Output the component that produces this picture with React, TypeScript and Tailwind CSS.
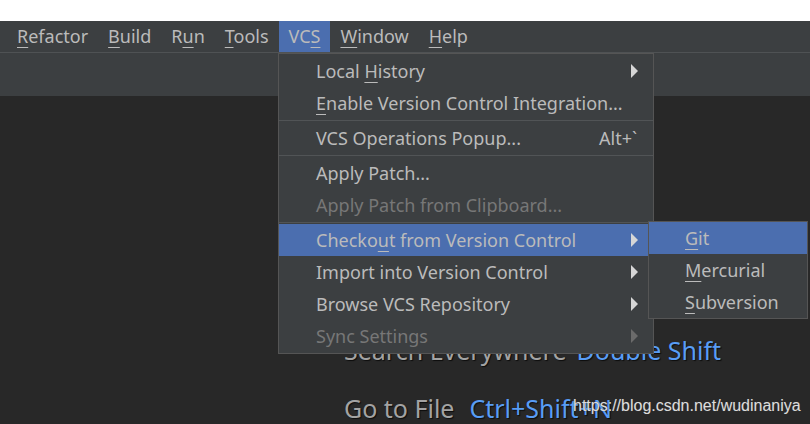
import React from 'react';

type Item = {
  label: string;
  key?: number; // index of the mnemonic letter
  shortcut?: string;
  arrow?: boolean;
  disabled?: boolean;
  active?: boolean;
};

const topMenus: { label: string; key: number; active?: boolean }[] = [
  { label: 'Refactor', key: 0 },
  { label: 'Build', key: 0 },
  { label: 'Run', key: 1 },
  { label: 'Tools', key: 0 },
  { label: 'VCS', key: 2, active: true },
  { label: 'Window', key: 0 },
  { label: 'Help', key: 0 },
];

const groups: Item[][] = [
  [
    { label: 'Local History', key: 6, arrow: true },
    { label: 'Enable Version Control Integration...', key: 0 },
  ],
  [{ label: 'VCS Operations Popup...', shortcut: 'Alt+`' }],
  [
    { label: 'Apply Patch...' },
    { label: 'Apply Patch from Clipboard...', disabled: true },
  ],
  [
    { label: 'Checkout from Version Control', key: 6, arrow: true, active: true },
    { label: 'Import into Version Control', arrow: true },
    { label: 'Browse VCS Repository', arrow: true },
    { label: 'Sync Settings', arrow: true, disabled: true },
  ],
];

const checkoutItems: Item[] = [
  { label: 'Git', key: 0, active: true },
  { label: 'Mercurial', key: 0 },
  { label: 'Subversion', key: 0 },
];

function Label({ text, k }: { text: string; k?: number }) {
  if (k === undefined) return <span>{text}</span>;
  return (
    <span>
      {text.slice(0, k)}
      <span className="underline decoration-1 underline-offset-[4px]">{text[k]}</span>
      {text.slice(k + 1)}
    </span>
  );
}

function Arrow({ dim }: { dim?: boolean }) {
  return (
    <svg width="7" height="14" viewBox="0 0 7 14" className="shrink-0">
      <path d="M0 0 L7 7 L0 14 Z" fill={dim ? '#6b6b6b' : '#d6d6d6'} />
    </svg>
  );
}

function Row({ item, padLeft }: { item: Item; padLeft: string }) {
  return (
    <div
      className={`flex h-8 items-center justify-between pr-[15px] ${padLeft} ${
        item.active ? 'bg-[#4b6eaf]' : ''
      } ${item.disabled ? 'text-[#777777]' : 'text-[#bbbbbb]'}`}
    >
      <Label text={item.label} k={item.key} />
      {item.shortcut && <span className="pr-[1px]">{item.shortcut}</span>}
      {item.arrow && <Arrow dim={item.disabled} />}
    </div>
  );
}

export default function App() {
  return (
    <div className="relative flex h-screen w-full flex-col overflow-hidden bg-[#282828] font-['Noto_Sans',sans-serif] text-[18px]">
      <div className="h-[21px] shrink-0 bg-white" />

      {/* menu bar */}
      <div className="flex h-[32px] shrink-0 items-stretch border-b border-[#4f5254] bg-[#3c3f41] pl-[7px] text-[#bbbbbb]">
        {topMenus.map((m) => (
          <div
            key={m.label}
            className={`flex items-center px-[10px] ${m.active ? 'bg-[#4b6eaf]' : ''}`}
          >
            <Label text={m.label} k={m.key} />
          </div>
        ))}
      </div>

      {/* toolbar */}
      <div className="h-[43px] shrink-0 bg-[#3c3f41]" />

      {/* editor empty state */}
      <div className="flex flex-1 flex-col gap-[24px] pl-[344px] pt-[237px] text-[25px] leading-[34px] text-[#a3a3a3] [text-shadow:1px_1px_1px_rgba(0,0,0,0.7)]">
        <div className="whitespace-nowrap">
          Search Everywhere<span className="ml-[10px] text-[#589df6]">Double Shift</span>
        </div>
        <div className="whitespace-nowrap">
          Go to File<span className="ml-[15px] text-[#589df6]">Ctrl+Shift+N</span>
        </div>
      </div>

      {/* VCS dropdown */}
      <div className="absolute left-[278px] top-[53px] w-[376px] border border-[#555555] bg-[#3c3f41] py-px">
        {groups.map((g, gi) => (
          <React.Fragment key={gi}>
            {gi > 0 && (
              <div className="flex h-[3px] items-center">
                <div className="h-px w-full bg-[#515456]" />
              </div>
            )}
            {g.map((it) => (
              <Row key={it.label} item={it} padLeft="pl-[37px]" />
            ))}
          </React.Fragment>
        ))}
      </div>

      {/* Checkout submenu */}
      <div className="absolute left-[648px] top-[221px] w-[160px] border border-[#555555] bg-[#3c3f41]">
        {checkoutItems.map((it) => (
          <Row key={it.label} item={it} padLeft="pl-[36px]" />
        ))}
      </div>

      {/* watermark */}
      <div className="absolute left-[573px] top-[398px] font-['Liberation_Sans',sans-serif] text-[16px] leading-[16px] text-[#dcdcdc] [text-shadow:0_0_1px_rgba(80,80,80,0.9)]">
        https://blog.csdn.net/wudinaniya
      </div>
    </div>
  );
}
